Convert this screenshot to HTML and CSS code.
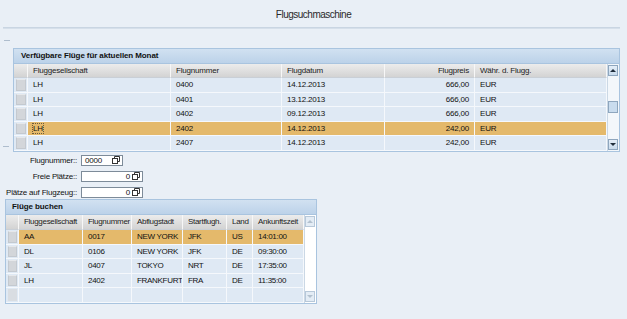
FILE: index.html
```html
<!DOCTYPE html>
<html lang="de">

<head>
    <meta charset="UTF-8">
    <title>Flugsuchmaschine</title>
    <link rel="stylesheet" href="styles.css">
</head>

<body>

    <div class="title">Flugsuchmaschine</div>
    <div class="rule"></div>
    <div class="dash dash-top"></div>

    <div class="block">
        <div class="gutter"><span class="dash"></span></div>
        <div class="panel panel-flights">
            <div class="panel-head">Verfügbare Flüge für aktuellen Monat</div>
            <div class="grid-wrap">
                <div class="rows">
                    <div class="row head">
                        <div class="cell sel-cell"></div>
                        <div class="cell">Fluggesellschaft</div>
                        <div class="cell">Flugnummer</div>
                        <div class="cell">Flugdatum</div>
                        <div class="cell num">Flugpreis</div>
                        <div class="cell">Währ. d. Flugg.</div>
                    </div>
                    <div class="row">
                        <div class="cell sel-cell"><span class="sel"></span></div>
                        <div class="cell">LH</div>
                        <div class="cell">0400</div>
                        <div class="cell">14.12.2013</div>
                        <div class="cell num">666,00</div>
                        <div class="cell">EUR</div>
                    </div>
                    <div class="row">
                        <div class="cell sel-cell"><span class="sel"></span></div>
                        <div class="cell">LH</div>
                        <div class="cell">0401</div>
                        <div class="cell">13.12.2013</div>
                        <div class="cell num">666,00</div>
                        <div class="cell">EUR</div>
                    </div>
                    <div class="row">
                        <div class="cell sel-cell"><span class="sel"></span></div>
                        <div class="cell">LH</div>
                        <div class="cell">0402</div>
                        <div class="cell">09.12.2013</div>
                        <div class="cell num">666,00</div>
                        <div class="cell">EUR</div>
                    </div>
                    <div class="row active">
                        <div class="cell sel-cell"><span class="sel"></span></div>
                        <div class="cell"><span class="focus">LH</span></div>
                        <div class="cell">2402</div>
                        <div class="cell">14.12.2013</div>
                        <div class="cell num">242,00</div>
                        <div class="cell">EUR</div>
                    </div>
                    <div class="row">
                        <div class="cell sel-cell"><span class="sel"></span></div>
                        <div class="cell">LH</div>
                        <div class="cell">2407</div>
                        <div class="cell">14.12.2013</div>
                        <div class="cell num">242,00</div>
                        <div class="cell">EUR</div>
                    </div>
                </div>
                <div class="vscroll">
                    <div class="sbtn"><span class="arrow up"></span></div>
                    <div class="thumb"></div>
                    <div class="track"></div>
                    <div class="sbtn"><span class="arrow down"></span></div>
                </div>
            </div>
        </div>
    </div>

    <div class="form">
        <label>Flugnummer::</label>
        <div class="input short"><span class="val">0000</span>
            <svg class="copy" width="8" height="8" viewBox="0 0 8 8"><path d="M2.5 2.5V0.5h5v5h-2"/><rect x="0.5" y="2.5" width="5" height="5"/></svg>
        </div>
        <label>Freie Plätze::</label>
        <div class="input wide"><span class="val right">0</span>
            <svg class="copy" width="8" height="8" viewBox="0 0 8 8"><path d="M2.5 2.5V0.5h5v5h-2"/><rect x="0.5" y="2.5" width="5" height="5"/></svg>
        </div>
        <label>Plätze auf Flugzeug::</label>
        <div class="input wide"><span class="val right">0</span>
            <svg class="copy" width="8" height="8" viewBox="0 0 8 8"><path d="M2.5 2.5V0.5h5v5h-2"/><rect x="0.5" y="2.5" width="5" height="5"/></svg>
        </div>
    </div>

    <div class="panel panel-book">
        <div class="panel-head">Flüge buchen</div>
        <div class="grid-wrap">
            <div class="rows">
                <div class="row head">
                    <div class="cell sel-cell"></div>
                    <div class="cell">Fluggesellschaft</div>
                    <div class="cell">Flugnummer</div>
                    <div class="cell">Abflugstadt</div>
                    <div class="cell">Startflugh.</div>
                    <div class="cell">Land</div>
                    <div class="cell">Ankunftszeit</div>
                </div>
                <div class="row active">
                    <div class="cell sel-cell"><span class="sel"></span></div>
                    <div class="cell">AA</div>
                    <div class="cell">0017</div>
                    <div class="cell">NEW YORK</div>
                    <div class="cell">JFK</div>
                    <div class="cell">US</div>
                    <div class="cell">14:01:00</div>
                </div>
                <div class="row">
                    <div class="cell sel-cell"><span class="sel"></span></div>
                    <div class="cell">DL</div>
                    <div class="cell">0106</div>
                    <div class="cell">NEW YORK</div>
                    <div class="cell">JFK</div>
                    <div class="cell">DE</div>
                    <div class="cell">09:30:00</div>
                </div>
                <div class="row">
                    <div class="cell sel-cell"><span class="sel"></span></div>
                    <div class="cell">JL</div>
                    <div class="cell">0407</div>
                    <div class="cell">TOKYO</div>
                    <div class="cell">NRT</div>
                    <div class="cell">DE</div>
                    <div class="cell">17:35:00</div>
                </div>
                <div class="row">
                    <div class="cell sel-cell"><span class="sel"></span></div>
                    <div class="cell">LH</div>
                    <div class="cell">2402</div>
                    <div class="cell">FRANKFURT</div>
                    <div class="cell">FRA</div>
                    <div class="cell">DE</div>
                    <div class="cell">11:35:00</div>
                </div>
                <div class="row empty">
                    <div class="cell sel-cell"><span class="sel"></span></div>
                    <div class="cell"></div>
                    <div class="cell"></div>
                    <div class="cell"></div>
                    <div class="cell"></div>
                    <div class="cell"></div>
                    <div class="cell"></div>
                </div>
            </div>
            <div class="vscroll off">
                <div class="sbtn"><span class="arrow up"></span></div>
                <div class="track"></div>
                <div class="sbtn"><span class="arrow down"></span></div>
            </div>
        </div>
    </div>

</body>

</html>
```

FILE: styles.css
```css
body {
    margin: 0;
    font-family: "Liberation Sans", Arial, sans-serif;
    font-size: 8px;
    letter-spacing: -0.2px;
    color: #111;
    background-color: #e9eff6;
    width: 627px;
    height: 319px;
    overflow: hidden;
}

.title {
    height: 27px;
    padding-top: 9px;
    box-sizing: border-box;
    line-height: 12px;
    font-size: 10px;
    letter-spacing: -0.5px;
    text-align: center;
    color: #2a2a2a;
}

.rule {
    height: 2px;
    margin: 0 7px 0 3px;
    background: linear-gradient(#c3d0de, #dbe4ee);
}

.dash {
    display: block;
    width: 6px;
    height: 1px;
    background-color: #aebdcd;
}

.dash-top {
    margin: 11px 0 0 4px;
}

.block {
    display: flex;
    margin-top: 7px;
}

.gutter {
    width: 13px;
    display: flex;
    align-items: flex-end;
    padding-bottom: 5px;
    box-sizing: border-box;
}

.gutter .dash {
    margin-left: 3px;
}

/* panels with a grid inside */
.panel {
    border: 1px solid #a9c4df;
    background-color: #dfe9f4;
}

.panel-flights {
    width: 607px;
    box-sizing: border-box;
}

.panel-book {
    width: 312px;
    box-sizing: border-box;
    margin: 1px 0 0 5px;
}

.panel-head {
    height: 14px;
    line-height: 14px;
    padding-left: 7px;
    font-weight: bold;
    letter-spacing: -0.1px;
    background: linear-gradient(#d1e1f1, #bcd2e9);
    border-bottom: 1px solid #a9c4df;
    color: #111;
}

.panel-book .panel-head {
    padding-left: 6px;
}

.grid-wrap {
    display: flex;
}

.rows {
    flex: 1;
}

.row {
    display: grid;
    height: 14.6px;
}

.row.head {
    height: 14px;
}

.panel-book .row.head {
    height: 15px;
}

.panel-flights .row {
    grid-template-columns: 14px 143px 111px 103px 90px 132px;
}

.panel-book .row {
    grid-template-columns: 13px 64px 49px 51px 44px 26px 51px;
}

.cell {
    box-sizing: border-box;
    padding: 0 5px;
    line-height: 13px;
    white-space: nowrap;
    overflow: hidden;
    border-right: 1px solid #f5f8fc;
    border-bottom: 1px solid #f5f8fc;
}

.panel-book .cell {
    padding: 0 4px 0 5px;
    letter-spacing: -0.3px;
}

.cell.num {
    text-align: right;
}

.row.head .cell {
    background: linear-gradient(#ececec, #d3d3d3);
    border-right: 1px solid #f7f7f7;
    border-bottom: 1px solid #c9cfd6;
    color: #222;
}

.row.active .cell {
    background-color: #e4b96b;
}

.cell.sel-cell {
    padding: 1px 1px 1px 2px;
}

.row.active .sel-cell {
    background-color: #dfe9f4 !important;
}

.sel {
    display: block;
    height: 100%;
    box-sizing: border-box;
    background-color: #d3d6da;
    border: 1px solid #c4c9cf;
    border-top-color: #e6e8eb;
}

.row.empty .sel {
    background-color: #d9dde2;
    border-color: #d9dde2;
}

.focus {
    outline: 1px dotted #6b5a3a;
    outline-offset: 0;
}

/* scrollbars */
.vscroll {
    width: 12px;
    display: flex;
    flex-direction: column;
    background-color: #f3f7fb;
    border-left: 1px solid #cbd8e5;
    box-sizing: border-box;
    padding: 1px 1px 1px 0;
}

.sbtn {
    height: 11px;
    border: 1px solid #8ea6be;
    background: linear-gradient(#e4eef8, #c9dbec);
    display: flex;
    align-items: center;
    justify-content: center;
    box-sizing: border-box;
}

.arrow {
    width: 0;
    height: 0;
    border-left: 3px solid transparent;
    border-right: 3px solid transparent;
}

.arrow.up {
    border-bottom: 3px solid #1f2d3b;
}

.arrow.down {
    border-top: 3px solid #1f2d3b;
}

.thumb {
    height: 12px;
    margin-top: 25px;
    border: 1px solid #8ea6be;
    background-color: #c9dcee;
    box-sizing: border-box;
}

.track {
    flex: 1;
}

.vscroll.off {
    background-color: #fff;
}

.vscroll.off .sbtn {
    border-color: #b7c8d9;
    background: #e3ecf5;
}

.vscroll.off .arrow.up {
    border-bottom-color: #b3c1cf;
}

.vscroll.off .arrow.down {
    border-top-color: #b3c1cf;
}

/* little form between the grids */
.form {
    display: grid;
    grid-template-columns: 77px auto;
    grid-auto-rows: 11px;
    row-gap: 5px;
    column-gap: 4px;
    align-items: center;
    justify-items: start;
    margin-top: 3px;
}

.form label {
    justify-self: end;
}

.input {
    height: 11px;
    box-sizing: border-box;
    border: 1px solid #7d8b99;
    background-color: #fff;
    display: flex;
    align-items: center;
    padding: 0 2px 0 3px;
    line-height: 9px;
}

.input.short {
    width: 42px;
}

.input.wide {
    width: 62px;
}

.val {
    flex: 1;
}

.val.right {
    text-align: right;
    padding-right: 2px;
}

.copy {
    fill: #fff;
    stroke: #333;
    stroke-width: 1;
}
```
